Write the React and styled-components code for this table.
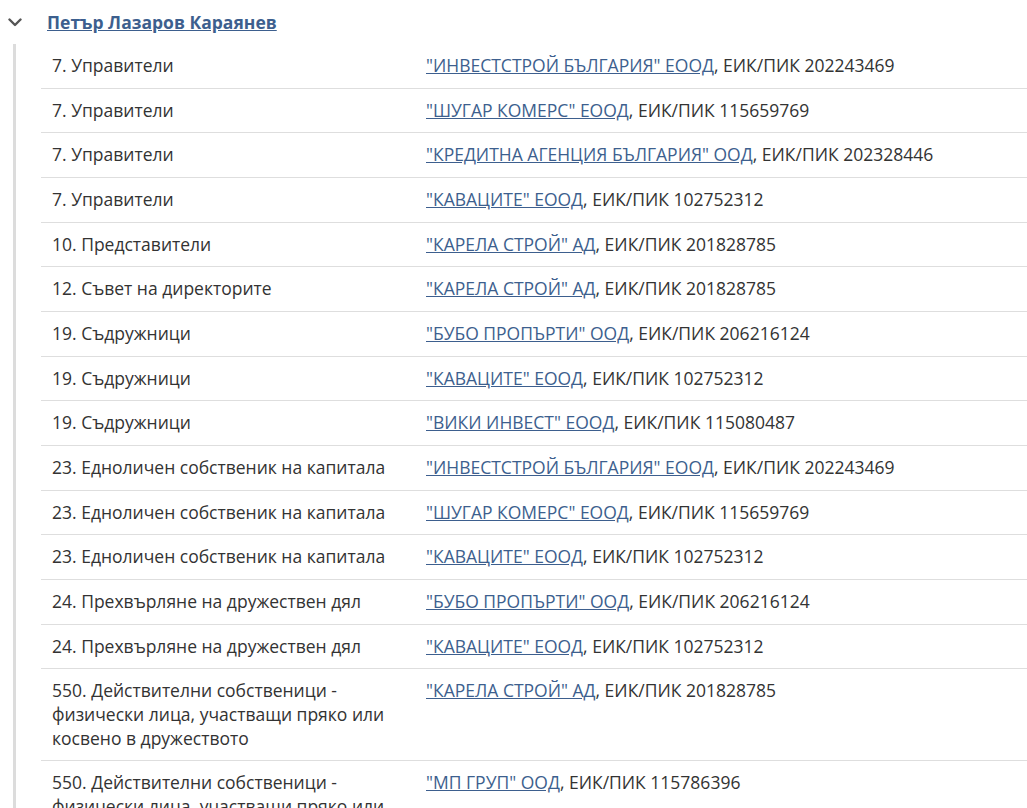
import React from 'react'
import styled, { createGlobalStyle } from 'styled-components'

const GlobalStyle = createGlobalStyle`
    body {
        margin: 0;
        background: #fff;
        font-family: "Open Sans", "Liberation Sans", sans-serif;
        color: #333;
    }
`

const Section = styled.div`
    padding-top: 9px;
`

const Header = styled.div`
    display: flex;
    align-items: center;
    height: 26px;
    padding-left: 8px;
`

const Toggle = styled.span`
    display: flex;
    width: 16px;
    margin-right: 23px;
    color: #555;
`

const PersonLink = styled.a`
    font-size: 17.5px;
    font-weight: 700;
    color: #3d5f8e;
    text-decoration: underline;
`

const Body = styled.div`
    margin: 9px 0 0 13px;
    border-left: 3px solid #dcdcdc;
    padding-left: 25px;
`

const Table = styled.table`
    width: 100%;
    border-collapse: collapse;
    font-size: 17.5px;
    line-height: 23.65px;
`

const Row = styled.tr`
    border-top: ${p => (p.$first ? 'none' : '1px solid #dedede')};
`

const Cell = styled.td`
    padding: 10px 11px;
    vertical-align: top;
    width: ${p => p.$width || 'auto'};
`

const Company = styled.a`
    color: #3d5f8e;
    text-decoration: underline;
`

const rows = [
    ['7. Управители', '"ИНВЕСТСТРОЙ БЪЛГАРИЯ" ЕООД', '202243469'],
    ['7. Управители', '"ШУГАР КОМЕРС" ЕООД', '115659769'],
    ['7. Управители', '"КРЕДИТНА АГЕНЦИЯ БЪЛГАРИЯ" ООД', '202328446'],
    ['7. Управители', '"КАВАЦИТЕ" ЕООД', '102752312'],
    ['10. Представители', '"КАРЕЛА СТРОЙ" АД', '201828785'],
    ['12. Съвет на директорите', '"КАРЕЛА СТРОЙ" АД', '201828785'],
    ['19. Съдружници', '"БУБО ПРОПЪРТИ" ООД', '206216124'],
    ['19. Съдружници', '"КАВАЦИТЕ" ЕООД', '102752312'],
    ['19. Съдружници', '"ВИКИ ИНВЕСТ" ЕООД', '115080487'],
    ['23. Едноличен собственик на капитала', '"ИНВЕСТСТРОЙ БЪЛГАРИЯ" ЕООД', '202243469'],
    ['23. Едноличен собственик на капитала', '"ШУГАР КОМЕРС" ЕООД', '115659769'],
    ['23. Едноличен собственик на капитала', '"КАВАЦИТЕ" ЕООД', '102752312'],
    ['24. Прехвърляне на дружествен дял', '"БУБО ПРОПЪРТИ" ООД', '206216124'],
    ['24. Прехвърляне на дружествен дял', '"КАВАЦИТЕ" ЕООД', '102752312'],
    ['550. Действителни собственици - физически лица, участващи пряко или косвено в дружеството', '"КАРЕЛА СТРОЙ" АД', '201828785'],
    ['550. Действителни собственици - физически лица, участващи пряко или косвено в дружеството', '"МП ГРУП" ООД', '115786396'],
]

const Chevron = () => (
    <svg width="14" height="9" viewBox="0 0 14 9" fill="none">
        <path d="M1.5 1.5 L7 7 L12.5 1.5" stroke="currentColor" strokeWidth="2.4" strokeLinecap="round" strokeLinejoin="round" />
    </svg>
)

export default function App() {
    return (
        <Section>
            <GlobalStyle />
            <Header>
                <Toggle>
                    <Chevron />
                </Toggle>
                <PersonLink href="#">Петър Лазаров Караянев</PersonLink>
            </Header>
            <Body>
                <Table>
                    <tbody>
                        {rows.map(([label, name, eik], i) => (
                            <Row key={i} $first={i === 0}>
                                <Cell $width="352px">{label}</Cell>
                                <Cell>
                                    <Company href="#">{name}</Company>, ЕИК/ПИК {eik}
                                </Cell>
                            </Row>
                        ))}
                    </tbody>
                </Table>
            </Body>
        </Section>
    )
}
